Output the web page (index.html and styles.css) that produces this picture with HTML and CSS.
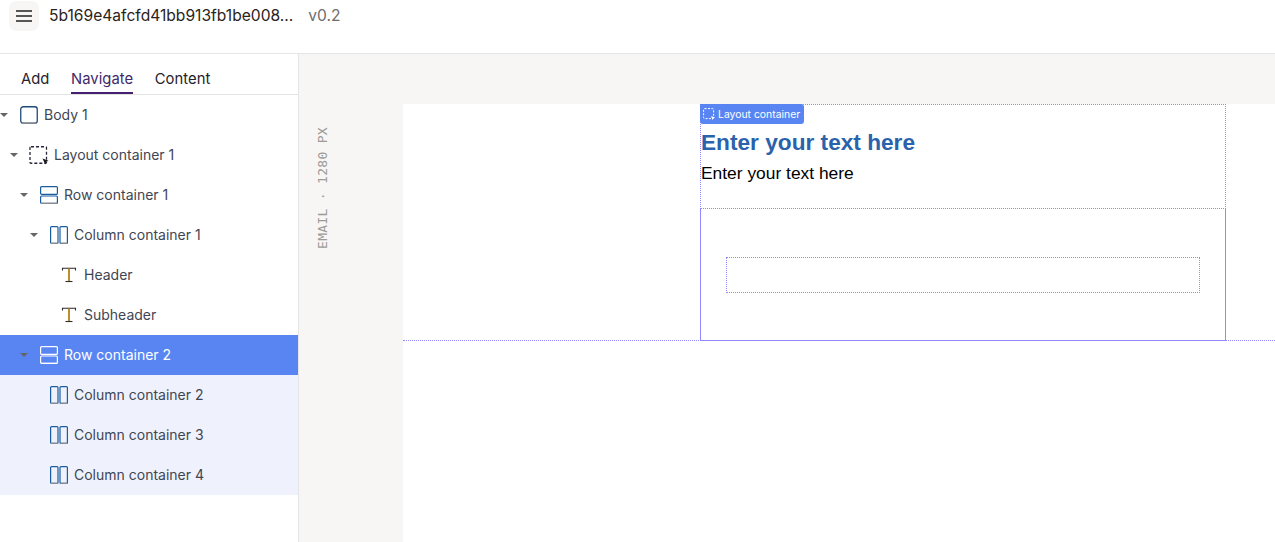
FILE: index.html
```html
<!DOCTYPE html>
<html>
<head>
    <meta charset="utf-8">
    <title>Email editor</title>
    <link rel="stylesheet" href="styles.css">
</head>
<body>
<svg class="defs" width="0" height="0">
    <symbol id="i-body" viewBox="0 0 18 18">
        <rect x="0.75" y="0.75" width="16.5" height="16.5" rx="2.5" fill="none" stroke="#1e4a78" stroke-width="1.3"/>
        <path d="M1.5 17.3h15" stroke="#8c8c8c" stroke-width="1.3"/>
    </symbol>
    <symbol id="i-layout" viewBox="0 0 18 18">
        <rect x="0" y="0.75" width="16.5" height="16.5" rx="1" fill="none" stroke="#2b2438" stroke-width="1.3" stroke-dasharray="3 2"/>
        <path d="M12.5 12.5l6 2.2-2.2 1-1 2.8z" fill="#1a1a1a"/>
    </symbol>
    <symbol id="i-row" viewBox="0 0 18 18">
        <rect x="0.6" y="0.6" width="16.8" height="7.8" rx="1" fill="none" stroke="currentColor" stroke-width="1.2"/>
        <rect x="0.6" y="10" width="16.8" height="7.4" rx="1" fill="none" stroke="currentColor" stroke-width="1.2"/>
        <path d="M1 17.4h16" stroke="var(--edge)" stroke-width="1.2"/>
    </symbol>
    <symbol id="i-col" viewBox="0 0 18 18">
        <rect x="0.6" y="0.6" width="7.4" height="16.8" rx="1" fill="none" stroke="currentColor" stroke-width="1.2"/>
        <rect x="10" y="0.6" width="7.4" height="16.8" rx="1" fill="none" stroke="currentColor" stroke-width="1.2"/>
        <path d="M1 17.4h7M10.4 17.4h7" stroke="var(--edge)" stroke-width="1.2"/>
    </symbol>
    <symbol id="i-text" viewBox="0 0 18 18">
        <path d="M2.5 4.5V2.2h13v2.3" fill="none" stroke="#2b2b2b" stroke-width="1.1"/>
        <path d="M9 2.5v12.8" stroke="#b07a10" stroke-width="1.7"/>
        <path d="M5.5 15.5h7" stroke="#2b2b2b" stroke-width="1.1"/>
    </symbol>
</svg>

<header class="topbar">
    <button class="menu-btn" aria-label="Menu">
        <svg width="16" height="12" viewBox="0 0 16 12"><path d="M0 1h16M0 6h16M0 11h16" stroke="#222" stroke-width="1.3"/></svg>
    </button>
    <span class="doc-name">5b169e4afcfd41bb913fb1be008...</span>
    <span class="doc-version">v0.2</span>
</header>

<div class="workspace">
    <aside class="sidebar">
        <nav class="tabs">
            <a class="tab">Add</a>
            <a class="tab active">Navigate</a>
            <a class="tab">Content</a>
        </nav>
        <ul class="tree">
            <li class="node depth-0"><i class="caret"></i><svg class="ico"><use href="#i-body"/></svg><span>Body 1</span></li>
            <li class="node depth-1"><i class="caret"></i><svg class="ico"><use href="#i-layout"/></svg><span>Layout container 1</span></li>
            <li class="node depth-2"><i class="caret"></i><svg class="ico"><use href="#i-row"/></svg><span>Row container 1</span></li>
            <li class="node depth-3"><i class="caret"></i><svg class="ico"><use href="#i-col"/></svg><span>Column container 1</span></li>
            <li class="node depth-4"><i class="no-caret"></i><svg class="ico"><use href="#i-text"/></svg><span>Header</span></li>
            <li class="node depth-4"><i class="no-caret"></i><svg class="ico"><use href="#i-text"/></svg><span>Subheader</span></li>
            <li class="node depth-2 selected"><i class="caret"></i><svg class="ico"><use href="#i-row"/></svg><span>Row container 2</span></li>
            <li class="node depth-3 child"><i class="no-caret"></i><svg class="ico"><use href="#i-col"/></svg><span>Column container 2</span></li>
            <li class="node depth-3 child"><i class="no-caret"></i><svg class="ico"><use href="#i-col"/></svg><span>Column container 3</span></li>
            <li class="node depth-3 child"><i class="no-caret"></i><svg class="ico"><use href="#i-col"/></svg><span>Column container 4</span></li>
        </ul>
    </aside>

    <main class="canvas">
        <div class="ruler"><span>EMAIL · 1280 PX</span></div>
        <div class="email">
            <section class="layout-box">
                <div class="tag">
                    <svg width="12" height="12" viewBox="0 0 12 12"><rect x="0.6" y="0.6" width="10" height="10" rx="1" fill="none" stroke="#fff" stroke-dasharray="2 1.4"/><path d="M8 8l4 1.6-1.6.7-.7 1.7z" fill="#fff"/></svg>
                    Layout container
                </div>
                <div class="row-one">
                    <h1 class="email-title">Enter your text here</h1>
                    <p class="email-sub">Enter your text here</p>
                </div>
                <div class="row-two">
                    <div class="column-box"></div>
                </div>
            </section>
        </div>
    </main>
</div>
</body>
</html>
```

FILE: styles.css
```css
* {
    box-sizing: border-box;
}

html, body {
    height: 100%;
}

body {
    margin: 0;
    overflow: hidden;
    background: #fff;
    color: #2e2e38;
    font-family: Inter, "Noto Sans", sans-serif;
    display: flex;
    flex-direction: column;
}

.defs {
    position: absolute;
}

symbol {
    overflow: visible;
}

.topbar {
    height: 54px;
    flex: none;
    display: flex;
    align-items: flex-start;
    padding: 1px 0 0 9px;
    border-bottom: 1px solid #e5e5e5;
}

.menu-btn {
    width: 30px;
    height: 30px;
    display: flex;
    align-items: center;
    justify-content: center;
    padding: 0;
    border: 0;
    border-radius: 8px;
    background: #f7f6f5;
}

.doc-name {
    margin-left: 10px;
    font-size: 15.6px;
    line-height: 30px;
    color: #2b2320;
}

.doc-version {
    margin-left: 15px;
    font-size: 15.6px;
    line-height: 30px;
    color: #6d6d6d;
}

.workspace {
    flex: 1;
    display: flex;
    min-height: 0;
}

.sidebar {
    width: 299px;
    flex: none;
    border-right: 1px solid #e5e5e5;
    background: #fff;
}

.tabs {
    height: 41px;
    display: flex;
    gap: 21.5px;
    align-items: flex-end;
    padding-left: 21px;
    border-bottom: 1px solid #e3e3e3;
}

.tab {
    height: 27px;
    padding-top: 3px;
    font-size: 14.8px;
    letter-spacing: 0.05px;
    line-height: 18px;
    color: #25222c;
}

.tab.active {
    color: #3f2a6b;
    padding: 3px 0 0;
    border-bottom: 2px solid #43206f;
}

.tree {
    list-style: none;
    margin: 0;
    padding: 0;
}

.node {
    --edge: #8c8c8c;
    height: 40px;
    display: flex;
    align-items: center;
    font-size: 14px;
    color: #3f4653;
    white-space: nowrap;
}

.node span {
    padding-bottom: 2px;
}

.depth-0 { padding-left: 0; }
.depth-1 { padding-left: 10px; }
.depth-2 { padding-left: 20px; }
.depth-3 { padding-left: 30px; }
.depth-4 { padding-left: 40px; }

.caret,
.no-caret {
    width: 8px;
    margin-right: 12px;
    flex: none;
}

.caret {
    height: 0;
    border-left: 4px solid transparent;
    border-right: 4px solid transparent;
    border-top: 4px solid #666;
}

.ico {
    width: 18px;
    height: 18px;
    margin-right: 6px;
    flex: none;
    overflow: visible;
    color: #1a5c9e;
}

.selected {
    --edge: #fff;
    background: #5885f2;
    color: #fff;
}

.selected .ico {
    color: #fff;
}

.child {
    background: #eff2fd;
}

.canvas {
    flex: 1;
    min-width: 0;
    display: flex;
    padding-top: 50px;
    background: #f7f6f5;
}

.ruler {
    width: 104px;
    flex: none;
    padding: 23px 0 0 17px;
}

.ruler span {
    display: block;
    writing-mode: vertical-rl;
    transform: rotate(180deg);
    font-family: "DejaVu Sans Mono", monospace;
    font-size: 13px;
    letter-spacing: 0.3px;
    line-height: 14px;
    color: #9b9b97;
}

.email {
    flex: 1;
    min-width: 0;
    background: #fff;
    padding-left: 297px;
    position: relative;
}

/* guide running the width of the frame under the row */
.email::after {
    content: "";
    position: absolute;
    left: 0;
    right: 0;
    top: 236px;
    border-top: 1px dotted #8f88ff;
}

.layout-box {
    width: 526px;
    position: relative;
    border: 1px dotted #8f88ff;
    border-bottom: 0;
}

.tag {
    position: absolute;
    left: -1px;
    top: -1px;
    height: 20px;
    padding: 0 4px 0 3px;
    display: flex;
    align-items: center;
    gap: 3px;
    border-radius: 0 3px 3px 3px;
    background: #5885f2;
    color: #fff;
    font-size: 10.4px;
    white-space: nowrap;
}

.row-one {
    height: 103px;
    padding-top: 23px;
    font-family: "Liberation Sans", Arial, sans-serif;
}

.email-title {
    margin: 0;
    font-size: 22.67px;
    line-height: 28px;
    font-weight: 700;
    color: #2a62ac;
}

.email-sub {
    margin: 3px 0 0;
    font-size: 17.4px;
    line-height: 28px;
    color: #000;
}

.row-two {
    height: 133px;
    margin: 0 -1px;
    padding: 48px 25px 0;
    border: 1px solid #8f88ff;
    border-top: 1px dotted #8f88ff;
}

.column-box {
    height: 36px;
    border: 1px dotted #8f88ff;
}
```
